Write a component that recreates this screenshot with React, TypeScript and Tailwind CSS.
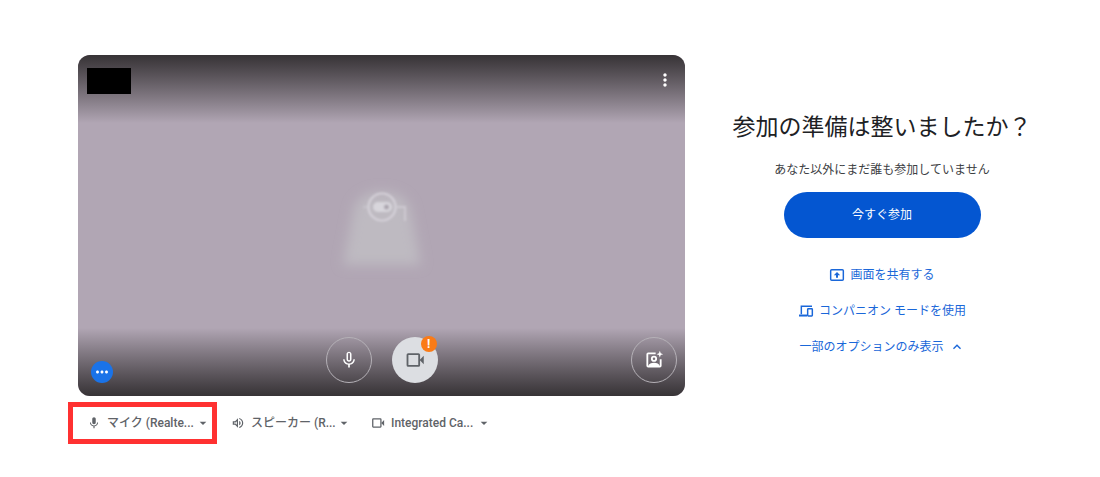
import { useState } from "react"
import type { ComponentType } from "react"
import {
  MdArrowDropDown,
  MdExpandLess,
  MdExpandMore,
  MdMic,
  MdMicNone,
  MdMoreHoriz,
  MdMoreVert,
  MdOutlineVolumeUp,
} from "react-icons/md"
import clsx from "clsx"

type Device = {
  id: string
  label: string
  value: string
  icon: ComponentType<{ className?: string }>
  selectClass: string
  highlighted?: boolean
}

const devices: Device[] = [
  { id: "mic", label: "マイク", value: "マイク (Realte...", icon: MdMic, selectClass: "w-[88px]", highlighted: true },
  { id: "speaker", label: "スピーカー", value: "スピーカー (R...", icon: MdOutlineVolumeUp, selectClass: "w-[85px]" },
  { id: "camera", label: "カメラ", value: "Integrated Ca...", icon: CameraIcon, selectClass: "w-[85px]" },
]

function CameraIcon({ className }: { className?: string }) {
  return (
    <svg viewBox="0 0 24 24" className={className} fill="none" stroke="currentColor" strokeWidth="2.2" aria-hidden="true">
      <rect x="3" y="5" width="14" height="14" rx="0.8" />
      <path d="M17.5 12L22.5 7v10z" fill="currentColor" stroke="none" />
    </svg>
  )
}

function EffectsIcon() {
  return (
    <svg viewBox="0 0 24 24" className="size-5" fill="none" stroke="currentColor" strokeWidth="2.2" aria-hidden="true">
      <path d="M14 4H5a1 1 0 0 0-1 1v14a1 1 0 0 0 1 1h14a1 1 0 0 0 1-1v-8" />
      <circle cx="12" cy="10.5" r="2.6" />
      <path d="M5 19.5c1-3.2 3.6-4.2 7-4.2s6 1 7 4.2z" fill="currentColor" stroke="none" />
      <path d="M19 1l1.1 2.9L23 5l-2.9 1.1L19 9l-1.1-2.9L15 5l2.9-1.1z" fill="currentColor" stroke="none" />
    </svg>
  )
}

function PresentIcon() {
  return (
    <svg viewBox="0 0 24 24" className="size-4" fill="none" stroke="currentColor" strokeWidth="2.2" aria-hidden="true">
      <rect x="2.5" y="4" width="19" height="16" rx="1.5" />
      <path d="M12 7.5l4.8 5h-3.3v3.5h-3v-3.5h-3.3z" fill="currentColor" stroke="none" />
    </svg>
  )
}

function CompanionIcon() {
  return (
    <svg viewBox="0 0 24 24" className="size-4" fill="none" stroke="currentColor" strokeWidth="2.2" aria-hidden="true">
      <path d="M5 17V5h16" />
      <path d="M1.5 18.8h12" strokeWidth="3" />
      <rect x="14.5" y="8.5" width="7" height="11" rx="1" />
    </svg>
  )
}

// Blurred figure behind the camera preview
function Silhouette() {
  return (
    <svg viewBox="0 0 130 120" className="h-[120px] w-[130px]" fill="none" aria-hidden="true">
      <defs>
        <filter id="haze" x="-40%" y="-40%" width="180%" height="180%">
          <feGaussianBlur stdDeviation="6" />
        </filter>
        <filter id="soft" x="-30%" y="-30%" width="160%" height="160%">
          <feGaussianBlur stdDeviation="0.8" />
        </filter>
      </defs>
      <path d="M37 42c7-22 49-22 56 0l11 57H26z" fill="#bebac1" filter="url(#haze)" />
      <g filter="url(#soft)" stroke="#d5d1d9">
        <circle cx="65" cy="41" r="13.5" strokeWidth="2.2" />
        <path d="M80 41h8v14" strokeWidth="2" opacity="0.7" />
        <path d="M46 41h5" strokeWidth="2" opacity="0.4" />
        <rect x="56" y="36" width="19" height="10" rx="5" fill="#d8d6dc" stroke="none" />
        <circle cx="69.5" cy="41" r="2.5" fill="#aaa4ae" stroke="none" />
      </g>
    </svg>
  )
}

function VideoPreview() {
  return (
    <section
      aria-label="プレビュー"
      className="relative ml-[10px] flex aspect-video flex-col justify-between overflow-hidden rounded-xl bg-[#b1a6b4]"
    >
      <div className="absolute inset-x-0 top-0 h-[68px] bg-linear-to-b from-[#373336] to-[#b1a6b4]" />
      <div className="absolute inset-x-0 bottom-0 h-[68px] bg-linear-to-t from-[#373336] to-[#b1a6b4]" />
      <div className="absolute inset-0 flex items-center justify-center">
        <Silhouette />
      </div>

      <div className="relative flex items-start justify-between pt-[13px] pr-[10px] pl-[9px]">
        <div className="h-[26px] w-11 bg-black" />
        <button type="button" aria-label="その他" className="mt-[2px] text-white">
          <MdMoreVert className="size-5" />
        </button>
      </div>

      <div className="relative grid grid-cols-3 items-end px-2 pb-[13px]">
        <button
          type="button"
          aria-label="オプション"
          className="ml-[5px] flex size-[22px] items-center justify-center rounded-full bg-[#1a73e8] text-white"
        >
          <MdMoreHoriz className="size-[18px]" />
        </button>
        <div className="flex justify-center gap-5">
          <button
            type="button"
            aria-label="マイク"
            className="flex size-[46px] items-center justify-center rounded-full border border-[#b5b1b7] text-white"
          >
            <MdMicNone className="size-5" />
          </button>
          <button
            type="button"
            aria-label="カメラ"
            className="relative flex size-[46px] items-center justify-center rounded-full bg-[#dcdee2] text-[#5f6368]"
          >
            <CameraIcon className="size-5" />
            <span className="absolute -top-px right-px flex size-4 items-center justify-center rounded-full bg-[#fa7b17] text-xs leading-4 font-bold text-white">
              !
            </span>
          </button>
        </div>
        <button
          type="button"
          aria-label="視覚効果"
          className="flex size-[46px] items-center justify-center justify-self-end rounded-full border border-[#b5b1b7] text-white"
        >
          <EffectsIcon />
        </button>
      </div>
    </section>
  )
}

function DeviceSelect({ device }: { device: Device }) {
  const Icon = device.icon
  return (
    <div
      className={clsx(
        "flex h-[42px] items-center border-[5px] text-[#5f6368]",
        device.highlighted ? "border-[#ff3131] pr-px pl-[14px]" : "border-transparent",
      )}
    >
      <label htmlFor={device.id} aria-label={device.label}>
        <Icon className="size-[14px]" />
      </label>
      <select
        id={device.id}
        className={clsx("ml-[6px] appearance-none bg-transparent text-xs font-medium outline-none", device.selectClass)}
      >
        <option>{device.value}</option>
      </select>
      <MdArrowDropDown className="pointer-events-none size-4" />
    </div>
  )
}

function JoinPanel() {
  const [expanded, setExpanded] = useState(true)

  return (
    <section className="mt-[57px] flex w-[300px] shrink-0 flex-col items-center text-[#1a67d9]">
      <h1 className="text-[23px] leading-8 whitespace-nowrap text-[#202124]">参加の準備は整いましたか？</h1>
      <p className="mt-[18px] text-xs text-[#3c4043]">あなた以外にまだ誰も参加していません</p>
      <button
        type="button"
        className="mt-[14px] h-[46px] w-[197px] rounded-full bg-[#0456d1] text-xs text-white"
      >
        今すぐ参加
      </button>

      <div className="mt-[19px] flex flex-col items-center text-xs">
        {expanded && (
          <>
            <button type="button" className="flex h-9 items-center gap-[5px]">
              <PresentIcon />
              画面を共有する
            </button>
            <button type="button" className="flex h-9 items-center gap-[5px]">
              <CompanionIcon />
              コンパニオン モードを使用
            </button>
          </>
        )}
        <button type="button" className="flex h-9 items-center gap-[5px]" onClick={() => setExpanded(!expanded)}>
          一部のオプションのみ表示
          {expanded ? <MdExpandLess className="size-4" /> : <MdExpandMore className="size-4" />}
        </button>
      </div>
    </section>
  )
}

export default function App() {
  return (
    <main className="flex min-h-screen items-start gap-[47px] bg-white pt-[55px] pr-[68px] pl-[68px] font-['Roboto','Noto_Sans_CJK_JP',sans-serif]">
      <div className="min-w-0 flex-1">
        <VideoPreview />
        <div className="mt-[6px] flex flex-wrap gap-x-[9px]">
          {devices.map((device) => (
            <DeviceSelect key={device.id} device={device} />
          ))}
        </div>
      </div>
      <JoinPanel />
    </main>
  )
}
